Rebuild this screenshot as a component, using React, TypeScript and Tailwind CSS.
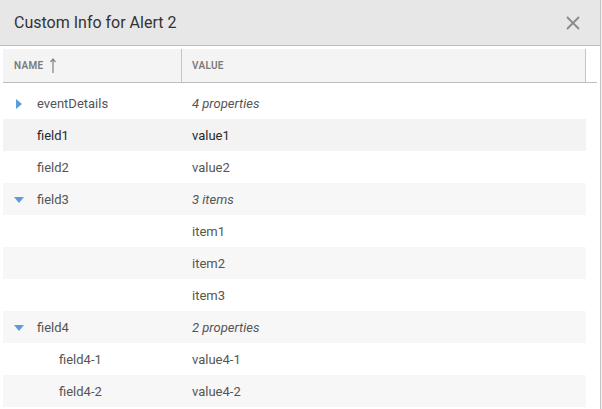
import React from "react";

type Row = {
  name?: string;
  value: string;
  italic?: boolean;
  toggle?: "open" | "closed";
  depth?: number;
  active?: boolean;
};

const rows: Row[] = [
  { name: "eventDetails", value: "4 properties", italic: true, toggle: "closed" },
  { name: "field1", value: "value1", active: true },
  { name: "field2", value: "value2" },
  { name: "field3", value: "3 items", italic: true, toggle: "open" },
  { value: "item1" },
  { value: "item2" },
  { value: "item3" },
  { name: "field4", value: "2 properties", italic: true, toggle: "open" },
  { name: "field4-1", value: "value4-1", depth: 1 },
  { name: "field4-2", value: "value4-2", depth: 1 },
];

function Caret({ open }: { open: boolean }) {
  return open ? (
    <svg width="10" height="6" viewBox="0 0 10 6" className="shrink-0">
      <path d="M0 0 L10 0 L5 6 Z" fill="#5b9bd8" />
    </svg>
  ) : (
    <svg width="6" height="10" viewBox="0 0 6 10" className="shrink-0">
      <path d="M0 0 L6 5 L0 10 Z" fill="#5b9bd8" />
    </svg>
  );
}

export default function App() {
  return (
    <div className="w-[602px] h-[409px] bg-[#efefef] overflow-hidden font-['Roboto',sans-serif]">
      <div className="w-[601px] h-[409px] bg-white border-r border-[#c4c4c4] flex flex-col">
        <div className="h-[46px] bg-[#e7e7e7] border-b border-[#bdbdbd] flex items-center justify-between pl-[14px] pr-[20px] shrink-0">
          <span className="text-[16px] text-[#333] leading-none">Custom Info for Alert 2</span>
          <svg width="14" height="14" viewBox="0 0 14 14">
            <path d="M1 1 L13 13 M13 1 L1 13" stroke="#8a8a8a" strokeWidth="1.8" />
          </svg>
        </div>

        <div className="pl-[3px] pt-[3px]">
          <div className="w-[594px] flex border-b border-[#bdbdbd] h-[34px]">
            <div className="w-[179px] bg-[#f4f4f4] border-r border-[#c4c4c4] flex items-center pl-[11px] gap-[6px]">
              <span className="text-[10px] font-semibold text-[#7a7a7a] tracking-[0.3px]">NAME</span>
              <svg width="8" height="15" viewBox="0 0 8 15">
                <path d="M4 1.5 L4 15 M1.5 4 L4 1 L6.5 4" stroke="#8a8a8a" strokeWidth="1.3" fill="none" />
              </svg>
            </div>
            <div className="w-[404px] bg-[#f4f4f4] border-r border-[#c4c4c4] flex items-center pl-[10px]">
              <span className="text-[10px] font-semibold text-[#7a7a7a] tracking-[0.3px]">VALUE</span>
            </div>
          </div>

          <div className="pt-[4px] w-[583px]">
            {rows.map((r, i) => (
              <div
                key={i}
                className={`h-[32px] pt-[2px] flex items-center text-[13px] ${
                  r.active ? "bg-[#f3f3f3] text-[#2a2a2a]" : i % 2 === 1 ? "bg-[#f7f7f7] text-[#555]" : "text-[#555]"
                }`}
              >
                <div className="w-[179px] flex items-center">
                  <div className="w-[34px] flex justify-center pr-[2px]">
                    {r.toggle && <Caret open={r.toggle === "open"} />}
                  </div>
                  <span className={r.depth ? "pl-[22px]" : ""}>{r.name}</span>
                </div>
                <div className={`pl-[10px] ${r.italic ? "italic" : ""}`}>{r.value}</div>
              </div>
            ))}
          </div>
        </div>
      </div>
    </div>
  );
}
